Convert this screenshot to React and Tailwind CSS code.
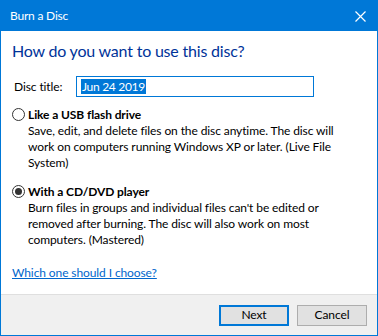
import React from "react";

function Radio({ checked }) {
  return (
    <span className="mt-[1px] flex h-[13px] w-[13px] shrink-0 items-center justify-center rounded-full border border-[#333333] bg-white">
      {checked ? <span className="h-[7px] w-[7px] rounded-full bg-[#333333]" /> : null}
    </span>
  );
}

export default function App() {
  const font = { fontFamily: 'Lato, "Noto Sans", sans-serif' };
  return (
    <div
      className="flex h-[336px] w-[378px] flex-col border border-[#0078d7] bg-white text-[12px] leading-[16px] tracking-[-0.1px] text-black"
      style={font}
    >
      <div className="flex h-[30px] shrink-0 items-center justify-between bg-[#0078d7] pl-[9px] pr-[10px] text-white">
        <span className="text-[12px] tracking-[-0.2px]">Burn a Disc</span>
        <svg width="11" height="11" viewBox="0 0 11 11" className="mr-[1px]">
          <path d="M0.5 0.5 L10.5 10.5 M10.5 0.5 L0.5 10.5" stroke="white" strokeWidth="1.2" />
        </svg>
      </div>
      <div className="flex flex-1 flex-col pl-[11px] pr-[10px]">
        <div className="mt-[9px] text-[16px] leading-[21px] tracking-[-0.2px] text-[#003399]">
          How do you want to use this disc?
        </div>
        <div className="mt-[15px] flex items-center">
          <span className="ml-[2px] w-[62px]">Disc title:</span>
          <div className="flex h-[21px] w-[238px] items-center border border-[#0078d7] pl-[4px]">
            <span className="bg-[#0078d7] px-[1px] leading-[15px] tracking-[-0.3px] text-white">Jun 24 2019</span>
          </div>
        </div>
        <div className="mt-[10px] flex gap-[3px]">
          <Radio checked={false} />
          <div className="flex flex-col">
            <span className="font-bold">Like a USB flash drive</span>
            <span>
              Save, edit, and delete files on the disc anytime. The disc will
              <br />
              work on computers running Windows XP or later. (Live File
              <br />
              System)
            </span>
          </div>
        </div>
        <div className="mt-[13px] flex gap-[3px]">
          <Radio checked={true} />
          <div className="flex flex-col">
            <span className="font-bold">With a CD/DVD player</span>
            <span>
              Burn files in groups and individual files can't be edited or
              <br />
              removed after burning. The disc will also work on most
              <br />
              computers. (Mastered)
            </span>
          </div>
        </div>
        <a className="mt-[17px] self-start text-[#0066cc] underline" href="#">
          Which one should I choose?
        </a>
      </div>
      <div className="flex h-[41px] shrink-0 items-center justify-end gap-[8px] border-t border-[#dfdfdf] bg-[#f0f0f0] pr-[10px]">
        <button className="h-[21px] w-[70px] border-2 border-[#0078d7] bg-[#e1e1e1] text-[12px]">
          Next
        </button>
        <button className="h-[21px] w-[70px] border border-[#adadad] bg-[#e1e1e1] text-[12px]">
          Cancel
        </button>
      </div>
    </div>
  );
}
